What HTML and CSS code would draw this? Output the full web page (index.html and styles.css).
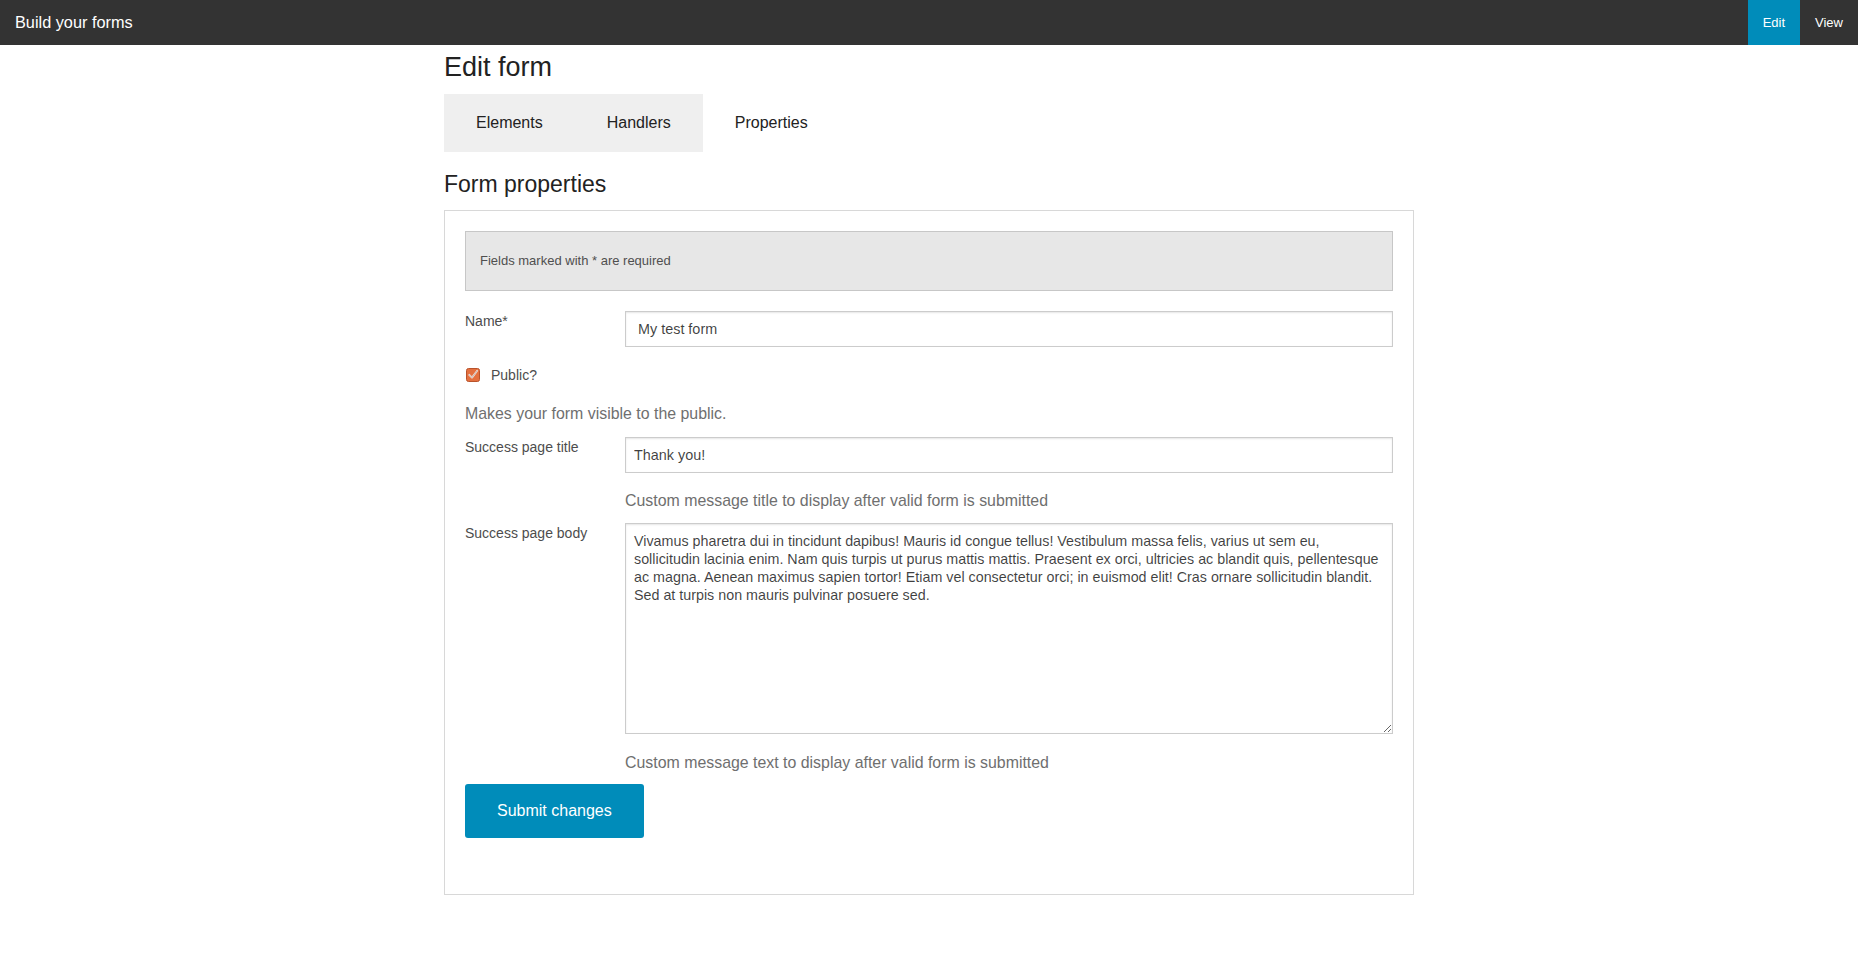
FILE: index.html
```html
<!DOCTYPE html>
<html lang="en">
<head>
<meta charset="utf-8">
<title>Build your forms</title>
<link rel="stylesheet" href="styles.css">
</head>
<body>
<nav class="topbar">
  <div class="topbar-title">Build your forms</div>
  <ul class="topbar-nav">
    <li><a class="topbar-link is-active" href="#">Edit</a></li>
    <li><a class="topbar-link" href="#">View</a></li>
  </ul>
</nav>

<main class="page">
  <h3 class="page-title">Edit form</h3>
  <ul class="tabs">
    <li class="tab">Elements</li>
    <li class="tab">Handlers</li>
    <li class="tab is-active">Properties</li>
  </ul>

  <h4 class="section-title">Form properties</h4>

  <form class="panel">
    <div class="alert">Fields marked with * are required</div>

    <div class="field-row field-row--name">
      <label class="field-label">Name*</label>
      <div class="field-control">
        <input class="text-input text-input--wide" type="text" value="My test form">
      </div>
    </div>

    <div class="check-row">
      <svg class="check-icon" width="14" height="14" viewBox="0 0 14 14" aria-hidden="true">
        <rect x="0.5" y="0.5" width="13" height="13" rx="2" fill="#e4703f" stroke="#b9532b"/>
        <path d="M3.2 6.8 L6 9.6 L11.2 2.8" fill="none" stroke="#f6e9e2" stroke-width="1.8" stroke-linecap="round" stroke-linejoin="round"/>
        <path d="M3.2 6.8 L6 9.6 L11.2 2.8" fill="none" stroke="#5a3a2e" stroke-width="0.6" stroke-linecap="round" stroke-linejoin="round" opacity="0.5"/>
      </svg>
      <span class="check-label">Public?</span>
    </div>

    <p class="help help--full">Makes your form visible to the public.</p>

    <div class="field-row field-row--title">
      <label class="field-label">Success page title</label>
      <div class="field-control">
        <input class="text-input" type="text" value="Thank you!">
        <p class="help help--title">Custom message title to display after valid form is submitted</p>
      </div>
    </div>

    <div class="field-row field-row--body">
      <label class="field-label">Success page body</label>
      <div class="field-control">
        <textarea class="text-area">Vivamus pharetra dui in tincidunt dapibus! Mauris id congue tellus! Vestibulum massa felis, varius ut sem eu, sollicitudin lacinia enim. Nam quis turpis ut purus mattis mattis. Praesent ex orci, ultricies ac blandit quis, pellentesque ac magna. Aenean maximus sapien tortor! Etiam vel consectetur orci; in euismod elit! Cras ornare sollicitudin blandit. Sed at turpis non mauris pulvinar posuere sed.</textarea>
        <p class="help help--body">Custom message text to display after valid form is submitted</p>
      </div>
    </div>

    <button class="submit-button" type="button">Submit changes</button>
  </form>
</main>
</body>
</html>
```

FILE: styles.css
```css
* {
  box-sizing: border-box;
}

html, body {
  margin: 0;
  padding: 0;
  background: #ffffff;
}

body {
  font-family: "Liberation Sans", Arial, Helvetica, sans-serif;
  color: #222222;
}

/* Top bar */
.topbar {
  display: flex;
  justify-content: space-between;
  align-items: stretch;
  height: 45px;
  background: #333333;
}

.topbar-title {
  padding-left: 15px;
  font-size: 16.3px;
  line-height: 45px;
  color: #ffffff;
}

.topbar-nav {
  display: flex;
  list-style: none;
  margin: 0;
  padding: 0;
}

.topbar-link {
  display: block;
  padding: 0 15px;
  font-size: 13px;
  line-height: 45px;
  color: #ffffff;
  text-decoration: none;
}

.topbar-link.is-active {
  background: #008cba;
}

/* Page */
.page {
  width: 970px;
  margin: 0 auto;
}

.page-title {
  margin: 3px 0 8px;
  font-size: 27px;
  font-weight: normal;
  line-height: 38px;
  color: #222222;
}

.tabs {
  display: flex;
  list-style: none;
  margin: 0;
  padding: 0;
}

.tab {
  height: 58px;
  padding: 0 32px;
  background: #efefef;
  font-size: 16px;
  line-height: 58px;
  color: #222222;
}

.tab.is-active {
  background: #ffffff;
}

.section-title {
  margin: 16px 0 10px;
  font-size: 23px;
  font-weight: normal;
  line-height: 32px;
  color: #222222;
}

/* Panel */
.panel {
  border: 1px solid #d8d8d8;
  padding: 20px 20px 56px;
}

.alert {
  height: 60px;
  margin-bottom: 20px;
  padding: 0 14px;
  border: 1px solid #c7c7c7;
  background: #e7e7e7;
  font-size: 13px;
  line-height: 58px;
  color: #4f4f4f;
}

.field-row {
  display: grid;
  grid-template-columns: 160px 1fr;
}

.field-label {
  font-size: 14px;
  line-height: 21px;
  color: #4d4d4d;
}

.field-row--name {
  margin-bottom: 16px;
}

.text-input {
  display: block;
  width: 100%;
  height: 36px;
  margin: 0;
  padding: 0 8px;
  border: 1px solid #cccccc;
  box-shadow: inset 0 1px 2px rgba(0, 0, 0, 0.1);
  background: #ffffff;
  font-family: "Liberation Sans", Arial, Helvetica, sans-serif;
  font-size: 14.4px;
  color: rgba(0, 0, 0, 0.75);
  outline: none;
}

.text-input--wide {
  padding-left: 12px;
}

.text-area {
  display: block;
  width: 100%;
  height: 211px;
  margin: 0;
  padding: 8px;
  border: 1px solid #cccccc;
  box-shadow: inset 0 1px 2px rgba(0, 0, 0, 0.1);
  background: #ffffff;
  font-family: "Liberation Sans", Arial, Helvetica, sans-serif;
  font-size: 14.3px;
  line-height: 18px;
  color: rgba(0, 0, 0, 0.75);
  resize: vertical;
  outline: none;
}

.check-row {
  display: flex;
  align-items: center;
  height: 24px;
  margin-bottom: 15px;
  padding-left: 1px;
}

.check-icon {
  display: block;
  flex: none;
}

.check-label {
  margin-left: 11px;
  font-size: 14px;
  line-height: 24px;
  color: #4d4d4d;
}

.help {
  margin: 0;
  font-size: 15.9px;
  line-height: 24px;
  color: #6f6f6f;
}

.help--full {
  margin-bottom: 11px;
}

.help--title {
  margin-top: 16px;
  margin-bottom: 10px;
}

.help--body {
  margin-top: 17px;
  margin-bottom: 9px;
}

.submit-button {
  display: block;
  height: 54px;
  margin: 0;
  padding: 0 32px;
  border: 0;
  border-radius: 3px;
  background: #008cba;
  font-family: "Liberation Sans", Arial, Helvetica, sans-serif;
  font-size: 16px;
  color: #ffffff;
  cursor: pointer;
}
```
